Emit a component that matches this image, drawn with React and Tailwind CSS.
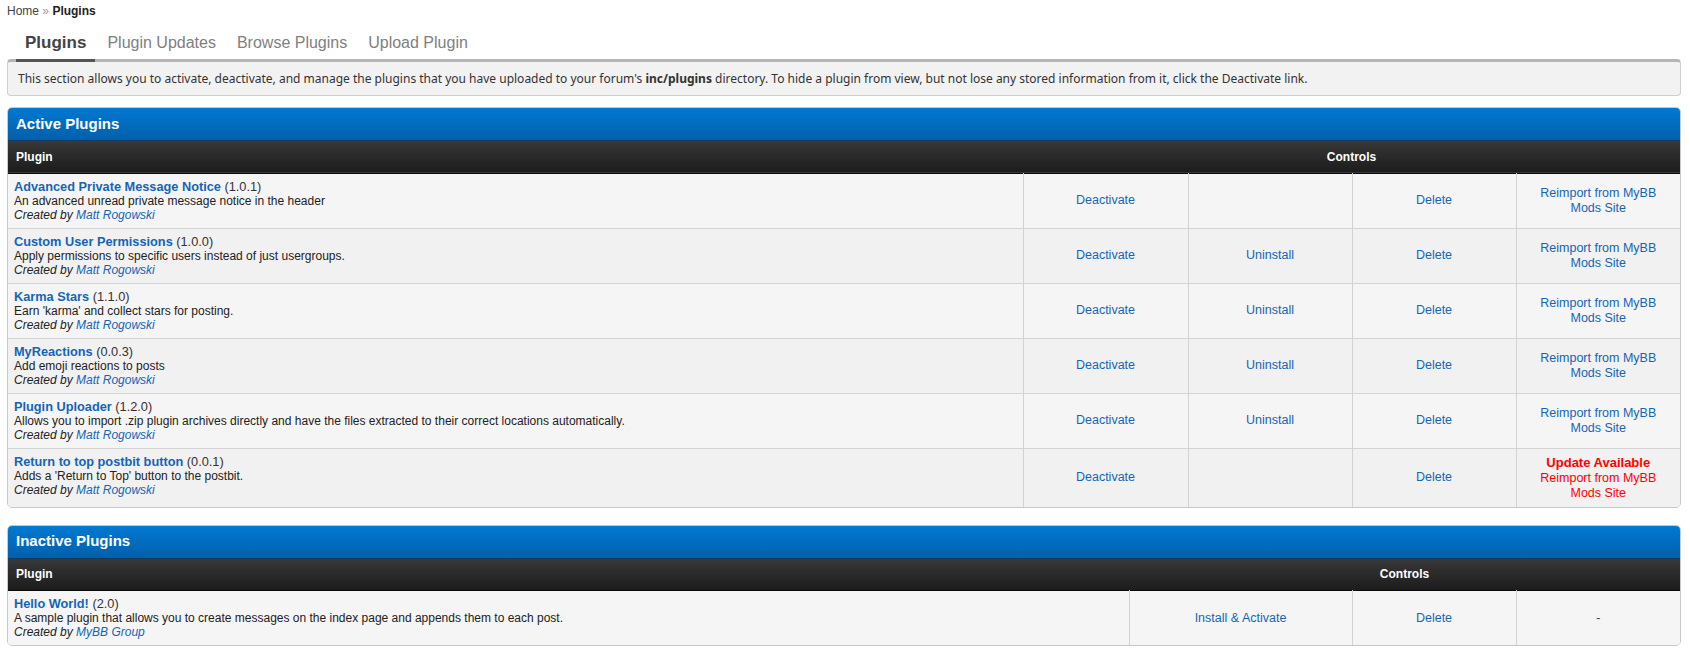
import React from "react";

const activePlugins = [
  {
    name: "Advanced Private Message Notice",
    version: "1.0.1",
    desc: "An advanced unread private message notice in the header",
    author: "Matt Rogowski",
    uninstall: false,
  },
  {
    name: "Custom User Permissions",
    version: "1.0.0",
    desc: "Apply permissions to specific users instead of just usergroups.",
    author: "Matt Rogowski",
    uninstall: true,
  },
  {
    name: "Karma Stars",
    version: "1.1.0",
    desc: "Earn 'karma' and collect stars for posting.",
    author: "Matt Rogowski",
    uninstall: true,
  },
  {
    name: "MyReactions",
    version: "0.0.3",
    desc: "Add emoji reactions to posts",
    author: "Matt Rogowski",
    uninstall: true,
  },
  {
    name: "Plugin Uploader",
    version: "1.2.0",
    desc: "Allows you to import .zip plugin archives directly and have the files extracted to their correct locations automatically.",
    author: "Matt Rogowski",
    uninstall: true,
  },
  {
    name: "Return to top postbit button",
    version: "0.0.1",
    desc: "Adds a 'Return to Top' button to the postbit.",
    author: "Matt Rogowski",
    uninstall: false,
    update: true,
  },
];

const tabs = ["Plugins", "Plugin Updates", "Browse Plugins", "Upload Plugin"];

const PluginInfo = ({ p }) => (
  <td className="py-[6px] pl-[6px] pr-2 align-top leading-[14px]">
    <div className="text-[12.75px]">
      <a className="font-bold text-[#1565b5]">{p.name}</a>{" "}
      <span className="text-[#333]">({p.version})</span>
    </div>
    <div className="text-[12px] text-[#222]">{p.desc}</div>
    <div className="text-[12px] italic text-[#222]">
      Created by <a className="text-[#1565b5]">{p.author}</a>
    </div>
  </td>
);

const Ctrl = ({ children }) => (
  <td className="border-l border-[#d2d2d2] py-[6px] px-3 text-center align-middle leading-[15px] text-[12.5px] text-[#1565b5]">
    {children}
  </td>
);

const PanelHead = ({ title }) => (
  <div className="h-[33px] flex items-center px-[8px] bg-gradient-to-b from-[#0279d2] to-[#0060ab] text-white font-bold text-[15px] border-b border-[#123a5e]">
    {title}
  </div>
);

const TableHead = ({ span }) => (
  <thead>
    <tr className="h-[32px] bg-gradient-to-b from-[#383838] to-[#1c1c1c] text-white text-[12px] font-bold border-b border-[#0a0a0a]">
      <th className="text-left pl-[8px]">Plugin</th>
      <th colSpan={span} className="text-center">
        Controls
      </th>
    </tr>
  </thead>
);

export default function App() {
  return (
    <div
      className="min-h-screen bg-white pl-[7px] pr-[9px] text-[#333]"
      style={{ fontFamily: '"Liberation Sans", Arial, sans-serif' }}
    >
      <div className="pt-[4px] leading-[14px] text-[12px] text-[#444]">
        Home <span className="text-[#999]">»</span>{" "}
        <span className="font-bold text-[#222]">Plugins</span>
      </div>

      <div className="mt-[15px] flex gap-[3px] pl-[9px] relative z-10">
        {tabs.map((t, i) => (
          <div
            key={t}
            className={
              i === 0
                ? "px-[9px] pb-[6px] leading-[20px] text-[17px] font-bold text-[#444] border-b-[3px] border-[#555]"
                : "px-[9px] pb-[6px] leading-[20px] text-[16px] text-[#808080] border-b-[3px] border-transparent"
            }
          >
            {t}
          </div>
        ))}
      </div>

      <div
        className="-mt-[3px] rounded-[4px] border border-[#cfcfcf] border-t-[3px] border-t-[#b5b5b5] bg-[#f2f2f2] pl-[10px] pt-[9px] pb-[8px] text-[12px] leading-[16px] text-[#333]"
        style={{ fontFamily: '"Noto Sans", sans-serif' }}
      >
        This section allows you to activate, deactivate, and manage the plugins
        that you have uploaded to your forum's <strong>inc/plugins</strong>{" "}
        directory. To hide a plugin from view, but not lose any stored
        information from it, click the Deactivate link.
      </div>

      {/* Active plugins */}
      <div className="mt-[11px] rounded-[5px] border border-[#c8c8c8] overflow-hidden">
        <PanelHead title="Active Plugins" />
        <table className="w-full table-fixed border-collapse">
          <colgroup>
            <col className="w-[1015px]" />
            <col className="w-[165px]" />
            <col className="w-[164px]" />
            <col className="w-[164px]" />
            <col className="w-[164px]" />
          </colgroup>
          <TableHead span={4} />
          <tbody>
            {activePlugins.map((p, i) => (
              <tr
                key={p.name}
                className={
                  (i % 2 === 0 ? "bg-[#f5f5f5]" : "bg-[#f1f1f1]") +
                  " border-t border-[#d4d4d4]"
                }
              >
                <PluginInfo p={p} />
                <Ctrl>
                  <a>Deactivate</a>
                </Ctrl>
                <Ctrl>{p.uninstall && <a>Uninstall</a>}</Ctrl>
                <Ctrl>
                  <a>Delete</a>
                </Ctrl>
                <Ctrl>
                  {p.update ? (
                    <span className="text-[#f00]">
                      <strong className="text-[13px]">Update Available</strong>
                      <br />
                      Reimport from MyBB Mods Site
                    </span>
                  ) : (
                    <a>Reimport from MyBB Mods Site</a>
                  )}
                </Ctrl>
              </tr>
            ))}
          </tbody>
        </table>
      </div>

      {/* Inactive plugins */}
      <div className="mt-[17px] rounded-[5px] border border-[#c8c8c8] overflow-hidden">
        <PanelHead title="Inactive Plugins" />
        <table className="w-full table-fixed border-collapse">
          <colgroup>
            <col className="w-[1121px]" />
            <col className="w-[223px]" />
            <col className="w-[164px]" />
            <col className="w-[164px]" />
          </colgroup>
          <TableHead span={3} />
          <tbody>
            <tr className="bg-[#f5f5f5]">
              <PluginInfo
                p={{
                  name: "Hello World!",
                  version: "2.0",
                  desc: "A sample plugin that allows you to create messages on the index page and appends them to each post.",
                  author: "MyBB Group",
                }}
              />
              <Ctrl>
                <a>Install &amp; Activate</a>
              </Ctrl>
              <Ctrl>
                <a>Delete</a>
              </Ctrl>
              <Ctrl>
                <span className="text-[#444]">-</span>
              </Ctrl>
            </tr>
          </tbody>
        </table>
      </div>
    </div>
  );
}
